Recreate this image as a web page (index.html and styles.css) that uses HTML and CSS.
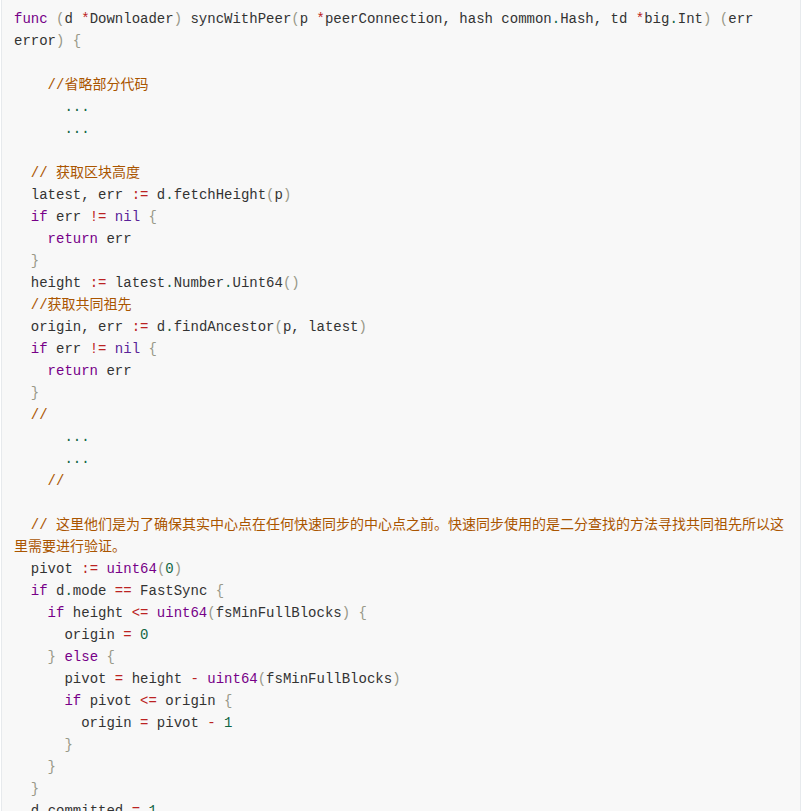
FILE: index.html
```html
<!DOCTYPE html>
<html>
<head>
<meta charset="utf-8">
<link rel="stylesheet" href="styles.css">
</head>
<body>
<div class="code">
<div class="line"><span class="kw">func</span> <span class="br">(</span>d <span class="op">*</span>Downloader<span class="br">)</span> syncWithPeer<span class="br">(</span>p <span class="op">*</span>peerConnection, hash common<span class="num">.</span>Hash, td <span class="op">*</span>big<span class="num">.</span>Int<span class="br">)</span> <span class="br">(</span>err error<span class="br">)</span> <span class="br">{</span></div>
<div class="line"></div>
<div class="line">    <span class="cm">//省略部分代码</span></div>
<div class="line">      <span class="num">...</span></div>
<div class="line">      <span class="num">...</span></div>
<div class="line"></div>
<div class="line">  <span class="cm">// 获取区块高度</span></div>
<div class="line">  latest, err <span class="op">:=</span> d<span class="num">.</span>fetchHeight<span class="br">(</span>p<span class="br">)</span></div>
<div class="line">  <span class="kw">if</span> err <span class="op">!=</span> <span class="atom">nil</span> <span class="br">{</span></div>
<div class="line">    <span class="kw">return</span> err</div>
<div class="line">  <span class="br">}</span></div>
<div class="line">  height <span class="op">:=</span> latest<span class="num">.</span>Number<span class="num">.</span>Uint64<span class="br">()</span></div>
<div class="line">  <span class="cm">//获取共同祖先</span></div>
<div class="line">  origin, err <span class="op">:=</span> d<span class="num">.</span>findAncestor<span class="br">(</span>p, latest<span class="br">)</span></div>
<div class="line">  <span class="kw">if</span> err <span class="op">!=</span> <span class="atom">nil</span> <span class="br">{</span></div>
<div class="line">    <span class="kw">return</span> err</div>
<div class="line">  <span class="br">}</span></div>
<div class="line">  <span class="cm">//</span></div>
<div class="line">      <span class="num">...</span></div>
<div class="line">      <span class="num">...</span></div>
<div class="line">    <span class="cm">//</span></div>
<div class="line"></div>
<div class="line">  <span class="cm">// 这里他们是为了确保其实中心点在任何快速同步的中心点之前。快速同步使用的是二分查找的方法寻找共同祖先所以这里需要进行验证。</span></div>
<div class="line">  pivot <span class="op">:=</span> <span class="kw">uint64</span><span class="br">(</span><span class="num">0</span><span class="br">)</span></div>
<div class="line">  <span class="kw">if</span> d<span class="num">.</span>mode <span class="op">==</span> FastSync <span class="br">{</span></div>
<div class="line">    <span class="kw">if</span> height <span class="op">&lt;=</span> <span class="kw">uint64</span><span class="br">(</span>fsMinFullBlocks<span class="br">)</span> <span class="br">{</span></div>
<div class="line">      origin <span class="op">=</span> <span class="num">0</span></div>
<div class="line">    <span class="br">}</span> <span class="kw">else</span> <span class="br">{</span></div>
<div class="line">      pivot <span class="op">=</span> height <span class="op">-</span> <span class="kw">uint64</span><span class="br">(</span>fsMinFullBlocks<span class="br">)</span></div>
<div class="line">      <span class="kw">if</span> pivot <span class="op">&lt;=</span> origin <span class="br">{</span></div>
<div class="line">        origin <span class="op">=</span> pivot <span class="op">-</span> <span class="num">1</span></div>
<div class="line">      <span class="br">}</span></div>
<div class="line">    <span class="br">}</span></div>
<div class="line">  <span class="br">}</span></div>
<div class="line">  d<span class="num">.</span>committed <span class="op">=</span> <span class="num">1</span></div>
<div class="line">  <span class="kw">if</span> d<span class="num">.</span>mode <span class="op">==</span> FastSync <span class="op">&amp;&amp;</span> pivot <span class="op">!=</span> <span class="num">0</span> <span class="br">{</span></div>
<div class="line">    d<span class="num">.</span>committed <span class="op">=</span> <span class="num">0</span></div>
<div class="line">  <span class="br">}</span></div>
</div>
</body>
</html>
```

FILE: styles.css
```css
html, body {
  margin: 0;
  padding: 0;
  background: #ffffff;
}

.code {
  margin-left: 1px;
  width: 774px;
  padding: 8px 12px 8px 12px;
  background: #f8f8f8;
  border: 1px solid #e7eaed;
  border-top: none;
  font-family: "Liberation Mono", "Noto Sans CJK SC", monospace;
  font-size: 14px;
  line-height: 22px;
  color: #333333;
}

.line {
  white-space: pre-wrap;
  min-height: 22px;
}

.kw { color: #770088; }
.atom { color: #5a2299; }
.op { color: #bb2222; }
.num { color: #116644; }
.cm { color: #aa5500; }
.br { color: #999988; }
```
